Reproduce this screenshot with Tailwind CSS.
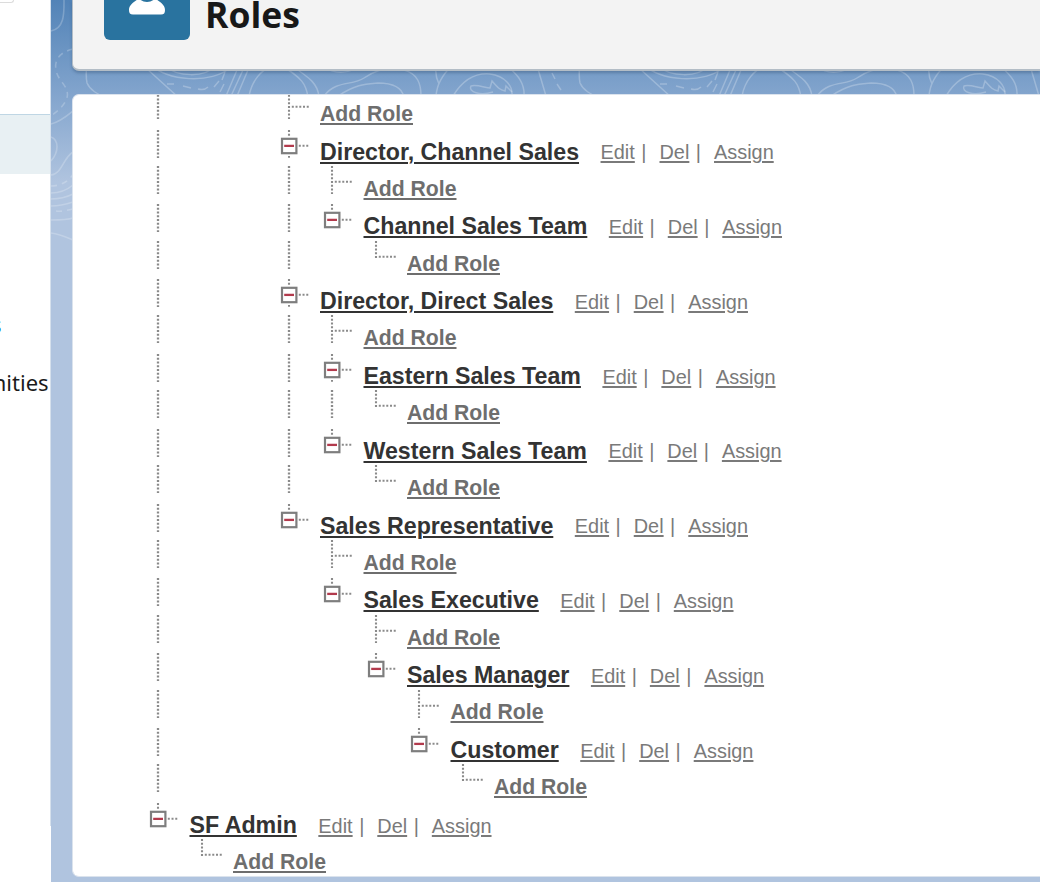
<!DOCTYPE html>
<html lang="en">
<head>
<meta charset="utf-8">
<title>Roles</title>
<script src="https://cdn.jsdelivr.net/npm/@tailwindcss/browser@4"></script>
</head>
<body class="w-[1040px] h-[882px] overflow-hidden bg-[#b0c4df]">
<svg width="0" height="0" class="absolute">
  <defs>
    <g id="guide" fill="none" stroke="#8a8a8a" stroke-width="2.3"><path d="M1 0V28" stroke-dasharray="2 1.735"/></g>
    <g id="tee" fill="none" stroke="#8a8a8a" stroke-width="2.1"><path d="M1 0V28M3.8 15.8H21.5" stroke-dasharray="2 1.735"/></g>
    <g id="ell" fill="none" stroke="#8a8a8a" stroke-width="2.1"><path d="M1 0V17M3.8 15.8H21.5" stroke-dasharray="2 1.735"/></g>
    <g id="box" fill="none"><path d="M1 0V6M10.8 15.8H20.5" stroke="#8a8a8a" stroke-width="2.1" stroke-dasharray="2 1.735"/><rect x="-6" y="8.8" width="14.4" height="14.4" fill="#fff" stroke="#7e7e7e" stroke-width="2.2"/><path d="M-3.8 15.9H6" stroke="#b23a4c" stroke-width="2.3"/></g>
    <g id="boxmid"><use href="#box"/><path d="M0 26.9H2" stroke="#8a8a8a" stroke-width="1.9"/></g>
    <g id="contour" fill="none" stroke="#fff" stroke-opacity=".25" stroke-width="1.5">
      <path d="M87 60C86 70 86 78 87 83C90 90 97 94 108 99"/>
      <path d="M146 68L178 97M152 65C164 80 212 86 232 66M164 66C178 77 204 78 216 66"/>
      <path d="M167 84H174M183 86L191 88M198 89C202 90 206 89 208 87M214 87L219 81M222 80L225 72M220 92L224 84"/>
      <path d="M237 70L226 96M243 70L231 96M248 70L237 96"/>
      <path d="M249 96C252 80 262 70 270 67M282 66C302 78 306 84 308 97M292 66C310 78 318 84 319 97"/>
      <path d="M325 67C334 75 353 73 357 66M324 96C336 80 352 86 364 78C376 70 390 66 404 70C418 74 421 84 421 96M338 96C356 84 366 84 378 83C394 83 402 88 404 97"/>
      <path d="M436 68C435 76 437 80 439 84M452 65C442 76 437 84 436 96M453 96C464 78 478 73 490 74C505 76 513 86 512 96M507 66C519 76 525 84 524 97M538 69L546 96"/>
      <path d="M493 92C480 96 468 92 471 86C476 84 486 88 490 88L492 81C498 88 500 90 505 91L506 86L512 92"/>
      <path d="M552 73L555 79M557 84L561 90"/>
    </g>
  </defs>
</svg>
<div class="relative flex w-full h-full">
  <aside class="relative z-10 flex flex-col w-[51px] shrink-0 h-full bg-white overflow-hidden font-['Open_Sans']">
    <div class="h-[114px] shrink-0"><div class="h-[2.5px] w-[14px] border-b border-r border-[#dcdcdc] rounded-br-[5px]"></div></div>
    <div class="h-[59.5px] shrink-0 border-t border-[#bfd6e4] bg-[#e8f0f3]"></div>
    <div class="mt-[135px] h-[30px] flex justify-end pr-[49.4px] text-[22px] leading-[30px] text-[#0b70d2] font-['Noto_Sans']">s</div>
    <div class="mt-[28px] h-[30px] flex justify-end pr-[2.4px] text-[22px] leading-[30px] text-[#1b1b1b] font-['Noto_Sans']">nities</div>
    <div class="absolute right-0 top-0 h-[826px] w-px bg-[#d5e0ec]"></div>
  </aside>
  <main class="relative flex-1 min-w-0 flex flex-col">
    <div class="absolute inset-0 bg-linear-to-b from-[#5283b7] from-0% via-[#80a3cc] via-[90px] to-[#b0c4df] to-[182px]"></div>
    <svg class="absolute -left-[51px] top-0" width="1040" height="260">
      <use href="#contour"/><use href="#contour" x="493"/>
      <g fill="none" stroke="#fff" stroke-opacity=".22" stroke-width="1.6">
        <path d="M64 0C64 12 65 28 51 31M51 124C60 122 67 116 73 111M51 137C59 140 59 152 51 161M51 175C62 174 63 158 73 152M51 193C60 193 67 190 73 185M51 199C60 199 67 197 73 194M51 206C60 206 67 204 73 202M51 220C60 220 67 220 73 218M51 233C60 234 66 237 73 240"/>
        <path d="M73 49C60 52 54 60 56 70C58 82 70 86 67 98C64 106 58 111 51 116M51 186C62 186 70 180 73 174M56 211C62 212 68 210 73 209" stroke-dasharray="6 5"/>
      </g>
    </svg>
    <header class="relative ml-[21px] h-[71px] shrink-0 bg-[#f3f3f3] border-l border-b-2 border-[#b3bdc6] rounded-bl-[7px] shadow-[0_2px_3px_rgba(40,70,100,0.35)] flex">
      <div class="ml-[31px] h-[39.5px] w-[86px] rounded-b-[6px] bg-[#29739f] overflow-hidden">
        <svg width="86" height="40" class="block"><path d="M25 10C25 4 31 2 35 -2H51C55 2 61 4 61 10C61 13 60 14.6 57 14.6H29C26 14.6 25 13 25 10Z" fill="#fff"/><circle cx="43" cy="-9" r="11" fill="#29739f"/></svg>
      </div>
      <h1 class="ml-[15px] -mt-[10px] h-[49px] leading-[49px] text-[35.5px] font-bold text-[#181818] font-['Open_Sans']">Roles</h1>
    </header>
    <section class="relative ml-[21px] mt-[23px] h-[782.5px] bg-white border-l border-y border-[#dbe3ed] rounded-l-[7px] overflow-hidden font-['Liberation_Sans']">
      <div id="tree" class="-mt-[4px] pl-[84px] flex flex-col"></div>
    </section>
  </main>
</div>
<script>
const rows = [
  ['|  T'],
  ['|  B', 'Director, Channel Sales'],
  ['|  |T'],
  ['|  |b', 'Channel Sales Team'],
  ['|  | L'],
  ['|  B', 'Director, Direct Sales'],
  ['|  |T'],
  ['|  |B', 'Eastern Sales Team'],
  ['|  ||L'],
  ['|  |b', 'Western Sales Team'],
  ['|  | L'],
  ['|  b', 'Sales Representative'],
  ['|   T'],
  ['|   b', 'Sales Executive'],
  ['|    T'],
  ['|    b', 'Sales Manager'],
  ['|     T'],
  ['|     b', 'Customer'],
  ['|      L'],
  ['b', 'SF Admin'],
  [' L']
];
const shapes = {'|': 'guide', T: 'tee', L: 'ell', B: 'boxmid', b: 'box'};
const link = t => `<a class="underline decoration-[1.6px] underline-offset-[1.8px]">${t}</a>`;
document.getElementById('tree').innerHTML = rows.map(([cells, name]) => {
  const list = [...cells];
  const icons = list.map((c, i) => `<span class="${i === list.length - 1 ? 'w-[32.5px]' : 'w-[43.5px]'} shrink-0">${
    shapes[c] ? `<svg width="22" height="30" class="block overflow-visible"><use href="#${shapes[c]}"/></svg>` : ''}</span>`).join('');
  const text = name
    ? `<span class="text-[23.2px] font-bold text-[#333] leading-[30px] pt-[7px]">${link(name)}</span>
       <span class="ml-[21.5px] flex text-[19.9px] text-[#7a7a7a] leading-[30px] pt-[7.7px]">${link('Edit')}<i class="not-italic ml-[6.5px] mr-[13px]">|</i>${link('Del')}<i class="not-italic ml-[6.5px] mr-[13px]">|</i>${link('Assign')}</span>`
    : `<span class="text-[21.2px] font-bold text-[#6e6e6e] leading-[30px] pt-[7.9px]">${link('Add Role')}</span>`;
  return `<div class="flex items-start whitespace-nowrap ${name ? 'h-[36.3px]' : 'h-[38.53px]'}">${icons}${text}</div>`;
}).join('');
</script>
</body>
</html>
